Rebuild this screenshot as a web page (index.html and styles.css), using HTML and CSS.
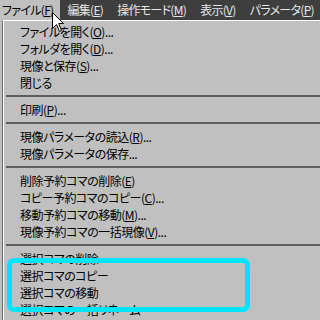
FILE: index.html
```html
<!DOCTYPE html>
<html lang="ja">
<head>
<meta charset="utf-8">
<link rel="stylesheet" href="styles.css">
</head>
<body>
<div class="screen">
  <div class="menubar">
    <span class="mi active">ファイル(<u>F</u>)</span>
    <span class="mi">編集(<u>E</u>)</span>
    <span class="mi">操作モード(<u>M</u>)</span>
    <span class="mi">表示(<u>V</u>)</span>
    <span class="mi">パラメータ(<u>P</u>)</span>
  </div>
  <div class="menu">
    <div class="item">ファイルを開く(<u>O</u>)...</div>
    <div class="item">フォルダを開く(<u>D</u>)...</div>
    <div class="item">現像と保存(<u>S</u>)...</div>
    <div class="item">閉じる</div>
    <div class="sep"></div>
    <div class="item">印刷(<u>P</u>)...</div>
    <div class="sep"></div>
    <div class="item">現像パラメータの読込(<u>R</u>)...</div>
    <div class="item">現像パラメータの保存...</div>
    <div class="sep"></div>
    <div class="item">削除予約コマの削除(<u>E</u>)</div>
    <div class="item">コピー予約コマのコピー(<u>C</u>)...</div>
    <div class="item">移動予約コマの移動(<u>M</u>)...</div>
    <div class="item">現像予約コマの一括現像(<u>V</u>)...</div>
    <div class="sep"></div>
    <div class="item">選択コマの削除</div>
    <div class="item">選択コマのコピー</div>
    <div class="item">選択コマの移動</div>
    <div class="item">選択コマの一括リネーム</div>
  </div>
  <div class="highlight"></div>
  <svg class="cursor" width="13" height="21" viewBox="0 0 13 21">
    <path d="M0.5 0.5 L0.5 16.5 L4.5 12.5 L7.5 19.5 L9.5 18.5 L6.7 11.5 L11.5 11.5 Z" fill="#fff" stroke="#000" stroke-width="1" stroke-linejoin="miter"/>
  </svg>
</div>
</body>
</html>
```
FILE: styles.css
```css
html, body {
  margin: 0;
  padding: 0;
  background: #c0c0c0;
  overflow: hidden;
}
.screen {
  position: relative;
  width: 100%;
  min-width: 256px;
  height: 320px;
  overflow: hidden;
  font-family: "Noto Sans CJK JP", "Noto Sans", sans-serif;
  font-size: 12px;
  letter-spacing: -0.5px;
  font-feature-settings: "palt";
  color: #000;
}
.menubar {
  display: flex;
  height: 20px;
  background: #3e3e3e;
  white-space: nowrap;
  overflow: hidden;
}
.mi {
  color: #e6e6e6;
  line-height: 20px;
  padding: 0 7px;
  letter-spacing: -0.7px;
  flex: none;
}
.mi.active {
  background: #c0c0c0;
  color: #000;
  padding-left: 2px;
}
.menu {
  margin-left: 2px;
  border-left: 1px solid #6a6a6a;
  border-top: 1px solid #fff;
  box-shadow: inset 1px 0 #fff;
  padding-top: 2px;
  height: 320px;
}
.item {
  height: 17px;
  line-height: 17px;
  padding-left: 17px;
  white-space: nowrap;
}
.sep {
  height: 2px;
  margin: 4px 0 4px 3px;
  background: #5e5e5e;
}
.highlight {
  position: absolute;
  left: 7px;
  top: 258px;
  width: 243px;
  height: 54px;
  box-sizing: border-box;
  border: 5px solid #00e5ff;
  border-radius: 7px;
}
.cursor {
  position: absolute;
  left: 52px;
  top: 12px;
}
```
